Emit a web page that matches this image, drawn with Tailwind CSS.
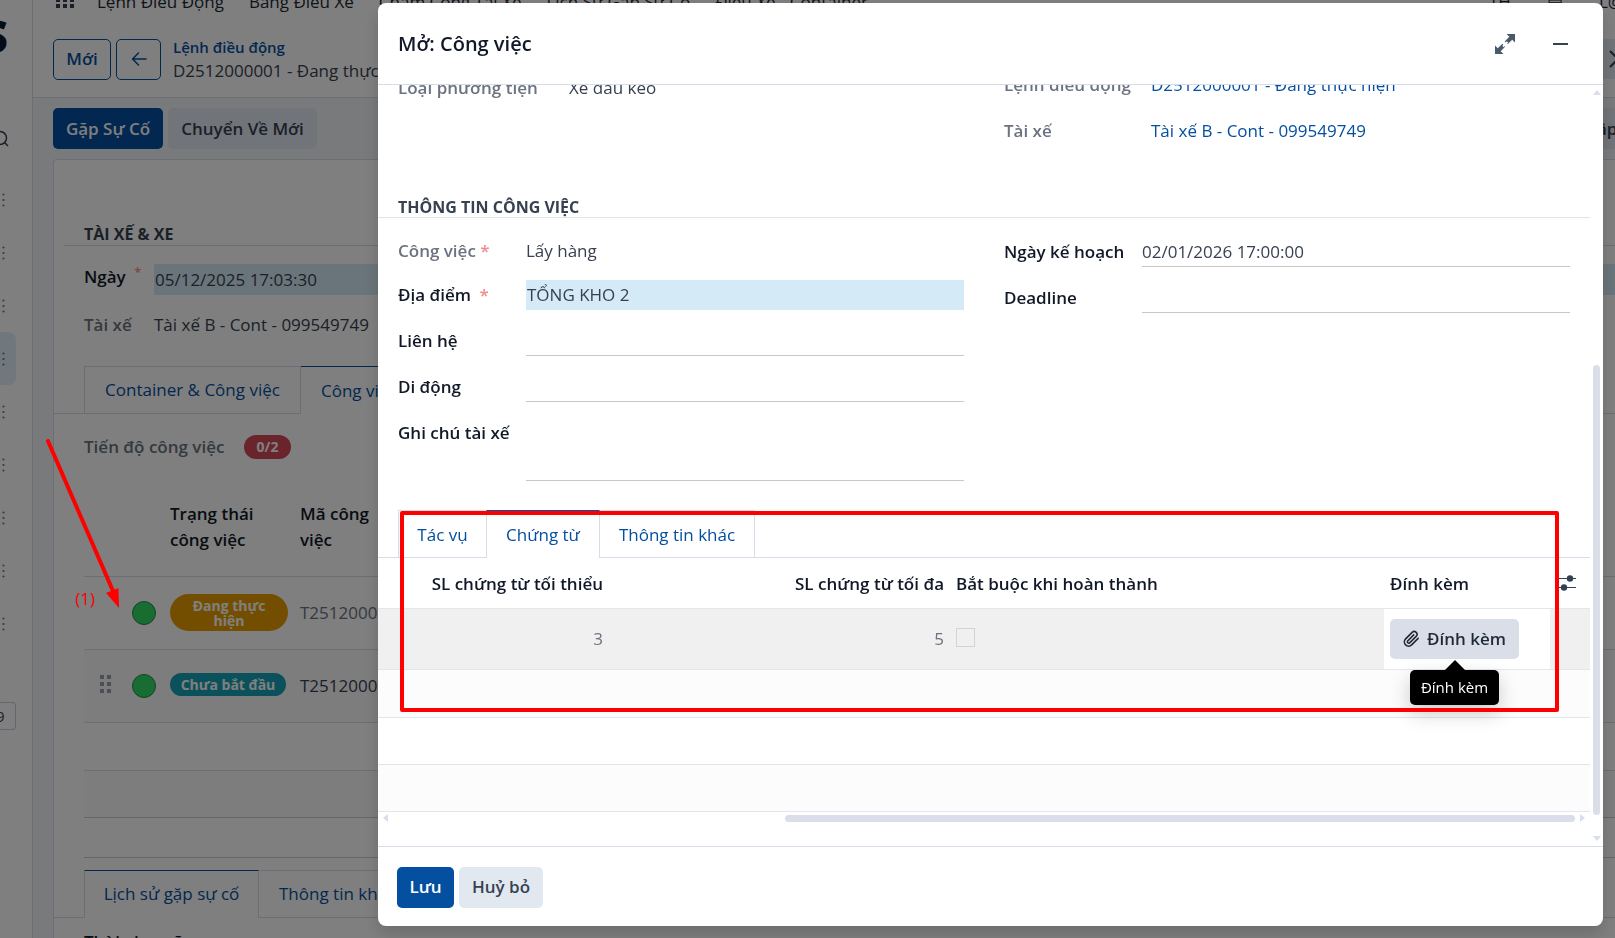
<!DOCTYPE html>
<html lang="vi">
<head>
    <meta charset="UTF-8">
    <meta name="viewport" content="width=device-width, initial-scale=1.0">
    <title>Công việc</title>
    <script src="https://cdn.jsdelivr.net/npm/@tailwindcss/browser@4"></script>
</head>
<body class="h-screen overflow-hidden bg-white font-['Open_Sans','Noto_Sans',sans-serif] text-[17px] leading-[26px] text-[#374151]">

    <!-- App behind the dialog -->
    <div class="flex h-screen overflow-hidden">
        <!-- Sidebar -->
        <aside class="flex w-[33px] shrink-0 flex-col overflow-hidden border-r border-[#d8dce8]">
            <div class="flex h-[98px] items-start justify-end pt-3 pr-6 text-[44px] leading-[48px] font-extrabold text-[#0f172a]">S</div>
            <div class="flex h-[75px] items-center pt-1">
                <svg class="-ml-2 h-5 w-5 shrink-0 text-[#374151]" viewBox="0 0 20 20" fill="none" stroke="currentColor" stroke-width="1.5"><circle cx="8" cy="10" r="6.5"/><path d="M12.500 14.500L16 18"/></svg>
            </div>
            <div id="menuDots" class="flex flex-col text-[#6b7280]"></div>
            <div class="mt-[52px] h-7 w-4 rounded-r border border-l-0 border-[#c9ced9] text-[15px] leading-[26px]"><span class="-ml-1">9</span></div>
        </aside>

        <div class="flex min-w-0 flex-1 flex-col">
            <!-- Top menu -->
            <nav class="flex h-5 shrink-0 items-start overflow-hidden pl-[23px] text-[#1f2937]">
                <svg class="h-[9px] w-[18px] shrink-0" viewBox="0 0 18 9" fill="#374151"><path d="M0 0h4v2H0zM7 0h4v2H7zM14 0h4v2h-4zM0 4h4v4H0zM7 4h4v4H7zM14 4h4v4h-4z"/></svg>
                <div class="-mt-[11px] ml-[23px] flex gap-[25px] whitespace-nowrap">
                    <a href="#">Lệnh Điều Động</a>
                    <a href="#">Bảng Điều Xe</a>
                    <a href="#">Chấm Công Tài Xế</a>
                    <a href="#">Lịch Sử Gặp Sự Cố</a>
                    <a href="#">Điều Xe - Container</a>
                </div>
                <div class="-mt-[11px] -mr-2 ml-auto flex gap-9"><span>TH</span><span>▤</span><span>L@</span></div>
            </nav>

            <!-- Control panel -->
            <header class="flex h-[78px] shrink-0 items-center border-b border-[#d8dce8] pt-px pl-5">
                <button class="h-[41px] w-[58px] rounded-[5px] border border-[#044fa0] font-semibold text-[#044fa0]">Mới</button>
                <button class="ml-[5px] flex h-[41px] w-[45px] items-center justify-center rounded-[5px] border border-[#044fa0] text-[#044fa0]" aria-label="Quay lại">
                    <svg class="h-4 w-4" viewBox="0 0 16 16" fill="none" stroke="currentColor" stroke-width="1.500" stroke-linecap="round" stroke-linejoin="round"><path d="M15 8H1.500M7.500 2L1.500 8l6 6"/></svg>
                </button>
                <div class="ml-3 leading-[23px] whitespace-nowrap">
                    <a href="#" class="block text-[15px] font-semibold text-[#044fa0]">Lệnh điều động</a>
                    <span>D2512000001 - Đang thực hiện</span>
                </div>
                <button class="ml-auto flex h-10 w-4 shrink-0 items-center overflow-hidden bg-[#e2e8f0]" aria-label="Sau">
                    <svg class="ml-[9px] h-5 w-3 shrink-0" viewBox="0 0 12 20" fill="none" stroke="currentColor" stroke-width="2"><path d="M2 2l8 8-8 8"/></svg>
                </button>
            </header>

            <main class="min-h-0 flex-1 overflow-hidden bg-[#f1f4f9] pt-[10px] pl-5">
                <div class="flex h-[41px] gap-[5px]">
                    <button class="w-[110px] rounded-[5px] bg-[#044fa0] font-semibold text-white">Gặp Sự Cố</button>
                    <button class="w-[149px] rounded-[5px] bg-[#e2e8f0] font-semibold">Chuyển Về Mới</button>
                    <button class="ml-auto w-[18px] overflow-hidden bg-[#e2e8f0] font-semibold">ập</button>
                </div>

                <!-- Sheet -->
                <div class="mt-[10px] h-[900px] rounded-tl border-t border-l border-[#d8dce8] bg-white">
                    <h2 class="ml-[10px] border-b border-[#d8dce8] pt-[63px] pl-5 text-[16px] leading-[22px] font-bold">TÀI XẾ &amp; XE</h2>
                    <div class="mt-[18px] flex pl-[30px]">
                        <label for="ngay" class="w-[70px] shrink-0 font-semibold text-[#111827]">Ngày <sup class="ml-1 text-[#f08c8c]">*</sup></label>
                        <input id="ngay" value="05/12/2025 17:03:30" class="h-[31px] flex-1 bg-[#d4ebf7] px-px">
                    </div>
                    <div class="mt-[17px] flex pl-[30px]">
                        <span class="w-[70px] shrink-0 font-semibold text-[#6b7280]">Tài xế</span>
                        <span>Tài xế B - Cont - 099549749</span>
                    </div>
                    <div class="mt-7 flex h-12 whitespace-nowrap text-[#044fa0]">
                        <span class="w-[30px] border-b border-[#d8dce8]"></span>
                        <button class="w-[217px] border border-[#d8dce8]">Container &amp; Công việc</button>
                        <button class="w-[190px] border-t border-[#044fa0] pl-5 text-left">Công việc</button>
                        <span class="flex-1 border-b border-[#d8dce8]"></span>
                    </div>
                    <div class="mt-[21px] flex h-6 items-center pl-[30px]">
                        <span class="w-[160px] font-semibold text-[#6b7280]">Tiến độ công việc</span>
                        <span class="w-[47px] rounded-full bg-[#d44a59] text-center text-[14px] leading-6 font-bold text-white">0/2</span>
                    </div>

                    <table class="mt-[30px] ml-[30px] w-[1600px] table-fixed border-b border-[#c9cdda] text-left">
                        <thead>
                            <tr class="h-[87px] border-b border-[#d8dce8] text-[#111827]">
                                <th class="w-[86px]"></th>
                                <th class="w-[130px] pb-[10px] font-semibold">Trạng thái<br>công việc</th>
                                <th class="pb-[10px] font-semibold">Mã công<br>việc</th>
                            </tr>
                        </thead>
                        <tbody>
                            <tr class="h-[73px] border-b border-[#d8dce8]">
                                <td><span class="ml-[48px] block h-6 w-6 rounded-full border border-[#208a48] bg-[#32da64]"></span></td>
                                <td><span class="flex h-[37px] w-[118px] items-center justify-center rounded-full bg-[#e99d00] text-center text-[14px] leading-[15px] font-bold text-white">Đang thực<br>hiện</span></td>
                                <td class="text-[#6b7280]">T2512000001</td>
                            </tr>
                            <tr class="h-[73px] border-b border-[#d8dce8] bg-[#fbfbfb]">
                                <td>
                                    <div class="flex items-center pl-4">
                                        <svg class="mb-1 h-[18px] w-[11px]" viewBox="0 0 11 18" fill="#9a9fac"><path d="M0 0h4v4H0zM7 0h4v4H7zM0 7h4v4H0zM7 7h4v4H7zM0 14h4v4H0zM7 14h4v4H7z"/></svg>
                                        <span class="ml-[21px] block h-6 w-6 rounded-full border border-[#208a48] bg-[#32da64]"></span>
                                    </div>
                                </td>
                                <td class="pb-[2px]"><span class="block w-[116px] rounded-full bg-[#17a2b8] text-center text-[14px] leading-[23px] font-bold text-white">Chưa bắt đầu</span></td>
                                <td>T2512000002</td>
                            </tr>
                            <tr class="h-12 border-b border-[#d8dce8]"><td colspan="3"></td></tr>
                            <tr class="h-[47px] bg-[#fbfbfb]"><td colspan="3"></td></tr>
                        </tbody>
                    </table>
                    <div class="ml-[30px] h-10 border-b border-[#c9cdda]"></div>

                    <div class="mt-3 flex h-12 whitespace-nowrap text-[#044fa0]">
                        <span class="w-[30px] border-b border-[#d8dce8]"></span>
                        <button class="w-[175px] border-x border-t border-x-[#d8dce8] border-t-[#044fa0]">Lịch sử gặp sự cố</button>
                        <button class="w-[170px] border-t border-b border-[#d8dce8] pl-5 text-left">Thông tin khác</button>
                        <span class="flex-1 border-b border-[#d8dce8]"></span>
                    </div>
                    <div class="mt-[11px] pl-[30px] font-semibold text-[#111827]">Thời gian gặp</div>
                </div>
            </main>
        </div>
    </div>

    <!-- Dialog -->
    <div class="fixed inset-0 flex bg-black/50 pt-[3px] pr-3 pb-3 pl-[378px]">
        <div role="dialog" aria-labelledby="dialogTitle" class="flex min-w-0 flex-1 flex-col overflow-hidden rounded-lg bg-white shadow-[0_8px_16px_rgba(0,0,0,0.15)]">
            <header class="flex h-[82px] shrink-0 items-center border-b border-[#d8dce8] px-5 pt-px">
                <h1 id="dialogTitle" class="text-[20px] font-semibold text-[#111827]">Mở: Công việc</h1>
                <button class="ml-auto text-[#4b5a6b]" aria-label="Phóng to">
                    <svg class="h-5 w-5" viewBox="0 0 20 20" fill="currentColor"><path d="M11.500 0H20v8.500l-2.800-2.800-4.600 4.600-2.900-2.900 4.600-4.600zM0 11.500l2.800 2.800 4.600-4.600 2.900 2.900-4.600 4.600L8.500 20H0z"/><path d="M8 12.500L12.500 8" stroke="#fff" stroke-width="2"/></svg>
                </button>
                <button class="mr-[14px] ml-[38px] text-[#374151]" aria-label="Thu nhỏ">
                    <svg class="h-4 w-4" viewBox="0 0 16 16" stroke="currentColor" stroke-width="2"><path d="M0 8h15"/></svg>
                </button>
            </header>

            <div class="flex min-h-0 flex-1 overflow-hidden">
                <div class="min-w-0 flex-1">
                    <!-- Scrolled part of the form -->
                    <div class="-mt-[13px] grid h-[120px] grid-cols-2 gap-x-10 px-5">
                        <div class="flex pt-[3px]">
                            <span class="w-[171px] shrink-0 font-semibold text-[#6b7280]">Loại phương tiện</span>
                            <span>Xe đầu kéo</span>
                        </div>
                        <div class="flex flex-col gap-5">
                            <div class="flex">
                                <span class="w-[147px] shrink-0 font-semibold text-[#6b7280]">Lệnh điều động</span>
                                <a href="#" class="text-[#044fa0]">D2512000001 - Đang thực hiện</a>
                            </div>
                            <div class="flex">
                                <span class="w-[147px] shrink-0 font-semibold text-[#6b7280]">Tài xế</span>
                                <a href="#" class="text-[#044fa0]">Tài xế B - Cont - 099549749</a>
                            </div>
                        </div>
                    </div>

                    <h2 class="border-b border-[#e2e4e8] px-5 pt-[5px] text-[16px] leading-[20px] font-bold">THÔNG TIN CÔNG VIỆC</h2>

                    <div class="mt-4 grid grid-cols-2 gap-x-10 px-5 leading-[30px]">
                        <div class="flex flex-col gap-4">
                            <div class="flex h-[30px] items-end leading-[26px]">
                                <span class="w-32 shrink-0 font-semibold text-[#6b7280]">Công việc <span class="text-[#f08c8c]">*</span></span>
                                <span>Lấy hàng</span>
                            </div>
                            <div class="flex h-[30px]">
                                <label for="diaDiem" class="w-32 shrink-0 font-semibold text-[#111827]">Địa điểm <span class="ml-1 text-[#f08c8c]">*</span></label>
                                <input id="diaDiem" value="TỔNG KHO 2" class="min-w-0 flex-1 bg-[#d4ebf7] px-px">
                            </div>
                            <div class="flex h-[30px]">
                                <label for="lienHe" class="w-32 shrink-0 font-semibold text-[#111827]">Liên hệ</label>
                                <input id="lienHe" class="min-w-0 flex-1 border-b border-[#c8c8c8]">
                            </div>
                            <div class="flex h-[30px]">
                                <label for="diDong" class="w-32 shrink-0 font-semibold text-[#111827]">Di động</label>
                                <input id="diDong" class="min-w-0 flex-1 border-b border-[#c8c8c8]">
                            </div>
                            <div class="flex h-[63px]">
                                <label for="ghiChu" class="w-32 shrink-0 font-semibold text-[#111827]">Ghi chú tài xế</label>
                                <textarea id="ghiChu" class="min-w-0 flex-1 resize-none border-b border-[#c8c8c8]"></textarea>
                            </div>
                        </div>
                        <div class="flex flex-col gap-4 pt-[3px]">
                            <div class="flex h-[30px]">
                                <label for="keHoach" class="w-[138px] shrink-0 font-semibold text-[#111827]">Ngày kế hoạch</label>
                                <input id="keHoach" value="02/01/2026 17:00:00" class="min-w-0 flex-1 border-b border-[#c8c8c8]">
                            </div>
                            <div class="flex h-[30px]">
                                <label for="deadline" class="w-[138px] shrink-0 font-semibold text-[#111827]">Deadline</label>
                                <input id="deadline" class="min-w-0 flex-1 border-b border-[#c8c8c8]">
                            </div>
                        </div>
                    </div>

                    <!-- Tabs -->
                    <div class="mt-[29px] flex h-12 text-[#044fa0]">
                        <span class="w-5 border-b border-[#d8dce8]"></span>
                        <button class="w-[88px] border-t border-b border-l border-[#d8dce8] pt-[2px]">Tác vụ</button>
                        <button class="w-[114px] border-x border-t border-x-[#d8dce8] border-t-[#044fa0] pt-px">Chứng từ</button>
                        <button class="w-[155px] border-t border-r border-b border-[#d8dce8] pt-[2px]">Thông tin khác</button>
                        <span class="flex-1 border-b border-[#d8dce8]"></span>
                    </div>

                    <table class="w-full table-fixed text-left">
                        <thead>
                            <tr class="h-[50px] border-b border-[#e4e6ee] text-[#111827]">
                                <th class="w-[231px] pt-[2px] pr-[6px] text-right font-semibold">SL chứng từ tối thiểu</th>
                                <th class="w-[341px] pt-[2px] pr-[6px] text-right font-semibold">SL chứng từ tối đa</th>
                                <th class="pt-[2px] pl-[6px] font-semibold">Bắt buộc khi hoàn thành</th>
                                <th class="w-[166px] pt-[2px] pl-[6px] font-semibold">Đính kèm</th>
                                <th class="w-10 pl-2">
                                    <svg class="h-[18px] w-[18px]" viewBox="0 0 18 18" fill="#334155"><path d="M0 4h18v1H0zM0 13h18v1H0z"/><circle cx="12" cy="4.500" r="3.200"/><circle cx="6" cy="13.500" r="3.200"/></svg>
                                </th>
                            </tr>
                        </thead>
                        <tbody>
                            <tr class="h-[61px] border-b border-[#e4e6ee] bg-[#f0f0f0] text-[#6b7280]">
                                <td class="pr-[6px] text-right">3</td>
                                <td class="pr-[6px] text-right">5</td>
                                <td class="pb-[3px] pl-[6px]"><input type="checkbox" disabled aria-label="Bắt buộc khi hoàn thành" class="block h-[19px] w-[19px] appearance-none border border-[#d2d4d6]"></td>
                                <td class="bg-white pl-[6px]">
                                    <div class="relative w-[129px]">
                                        <button class="flex h-10 w-[129px] items-center justify-center gap-[7px] rounded-[5px] bg-[#dadee9] font-semibold text-[#1f2937]">
                                            <svg class="h-[18px] w-[17px]" viewBox="0 0 24 24" fill="none" stroke="currentColor" stroke-width="2.200" stroke-linecap="round"><path d="M21.400 11.100l-9.200 9.200a6 6 0 0 1-8.500-8.500l9.200-9.200a4 4 0 0 1 5.700 5.700l-9.200 9.200a2 2 0 0 1-2.800-2.800l8.500-8.500"/></svg>
                                            Đính kèm
                                        </button>
                                        <div role="tooltip" class="absolute top-[51px] left-5 z-10 w-[89px] rounded-[5px] bg-black text-center text-[15px] leading-[35px] text-white shadow-[0_8px_20px_rgba(0,0,0,0.2)]">
                                            <span class="absolute -top-[10px] left-[35px] border-x-10 border-b-10 border-x-transparent border-b-black"></span>
                                            Đính kèm
                                        </div>
                                    </div>
                                </td>
                                <td></td>
                            </tr>
                            <tr class="h-12 border-b border-[#e4e6ee] bg-[#fcfcfc]"><td colspan="5"></td></tr>
                            <tr class="h-[47px] border-b border-[#e4e6ee]"><td colspan="5"></td></tr>
                            <tr class="h-[47px] border-b border-[#e4e6ee] bg-[#fcfcfc]"><td colspan="5"></td></tr>
                        </tbody>
                    </table>

                    <!-- Horizontal scrollbar -->
                    <div class="mt-[3px] flex h-[7px] items-center px-[5px]">
                        <span class="border-y-4 border-r-5 border-y-transparent border-r-[#dadee9]"></span>
                        <span class="ml-auto h-[7px] w-[790px] rounded-full bg-[#dadee9]"></span>
                        <span class="ml-[5px] border-y-4 border-l-5 border-y-transparent border-l-[#dadee9]"></span>
                    </div>
                </div>

                <!-- Vertical scrollbar -->
                <div class="flex w-[13px] shrink-0 flex-col items-center py-[5px]">
                    <span class="border-x-4 border-b-5 border-x-transparent border-b-[#dadee9]"></span>
                    <span class="mt-auto mb-[21px] h-[450px] w-[7px] rounded-full bg-[#dadee9]"></span>
                    <span class="border-x-4 border-t-5 border-x-transparent border-t-[#dadee9]"></span>
                </div>
            </div>

            <footer class="flex h-20 shrink-0 items-center gap-[5px] border-t border-[#d8dce8] px-[19px] pt-px">
                <button class="h-[41px] w-[57px] rounded-[5px] bg-[#044fa0] font-semibold text-white">Lưu</button>
                <button class="h-[41px] w-[84px] rounded-[5px] bg-[#e2e8f0] font-semibold">Huỷ bỏ</button>
            </footer>
        </div>
    </div>

    <!-- Guide marks drawn over the page -->
    <div class="pointer-events-none absolute top-[511px] right-[56px] left-[400px] h-[201px] rounded-[2px] border-4 border-[#ff0000]"></div>
    <svg class="pointer-events-none absolute top-[439px] left-[45px] h-[172px] w-[80px]" viewBox="0 0 80 172"><path d="M3 2L68 152" stroke="#ff0000" stroke-width="4" stroke-linecap="round"/><path d="M61 154L73.500 149L74 169z" fill="#ff0000"/></svg>
    <span class="pointer-events-none absolute top-[586px] left-[75px] text-[#ff0000]">(1)</span>

    <script>
        // One drag handle per sidebar entry, the current one is highlighted
        const activeRow = 3;
        document.getElementById('menuDots').innerHTML = Array.from({ length: 9 }, (_, i) => `
            <div class="flex h-[53px] w-4 items-center rounded-r-lg ${i === activeRow ? 'bg-[#e0f1fb]' : ''}">
                <svg class="ml-[2px] h-[14px] w-[3px]" viewBox="0 0 3 14" fill="currentColor"><circle cx="1.500" cy="1.500" r="1.100"/><circle cx="1.500" cy="7" r="1.100"/><circle cx="1.500" cy="12.500" r="1.100"/></svg>
            </div>`).join('');
    </script>
</body>
</html>
